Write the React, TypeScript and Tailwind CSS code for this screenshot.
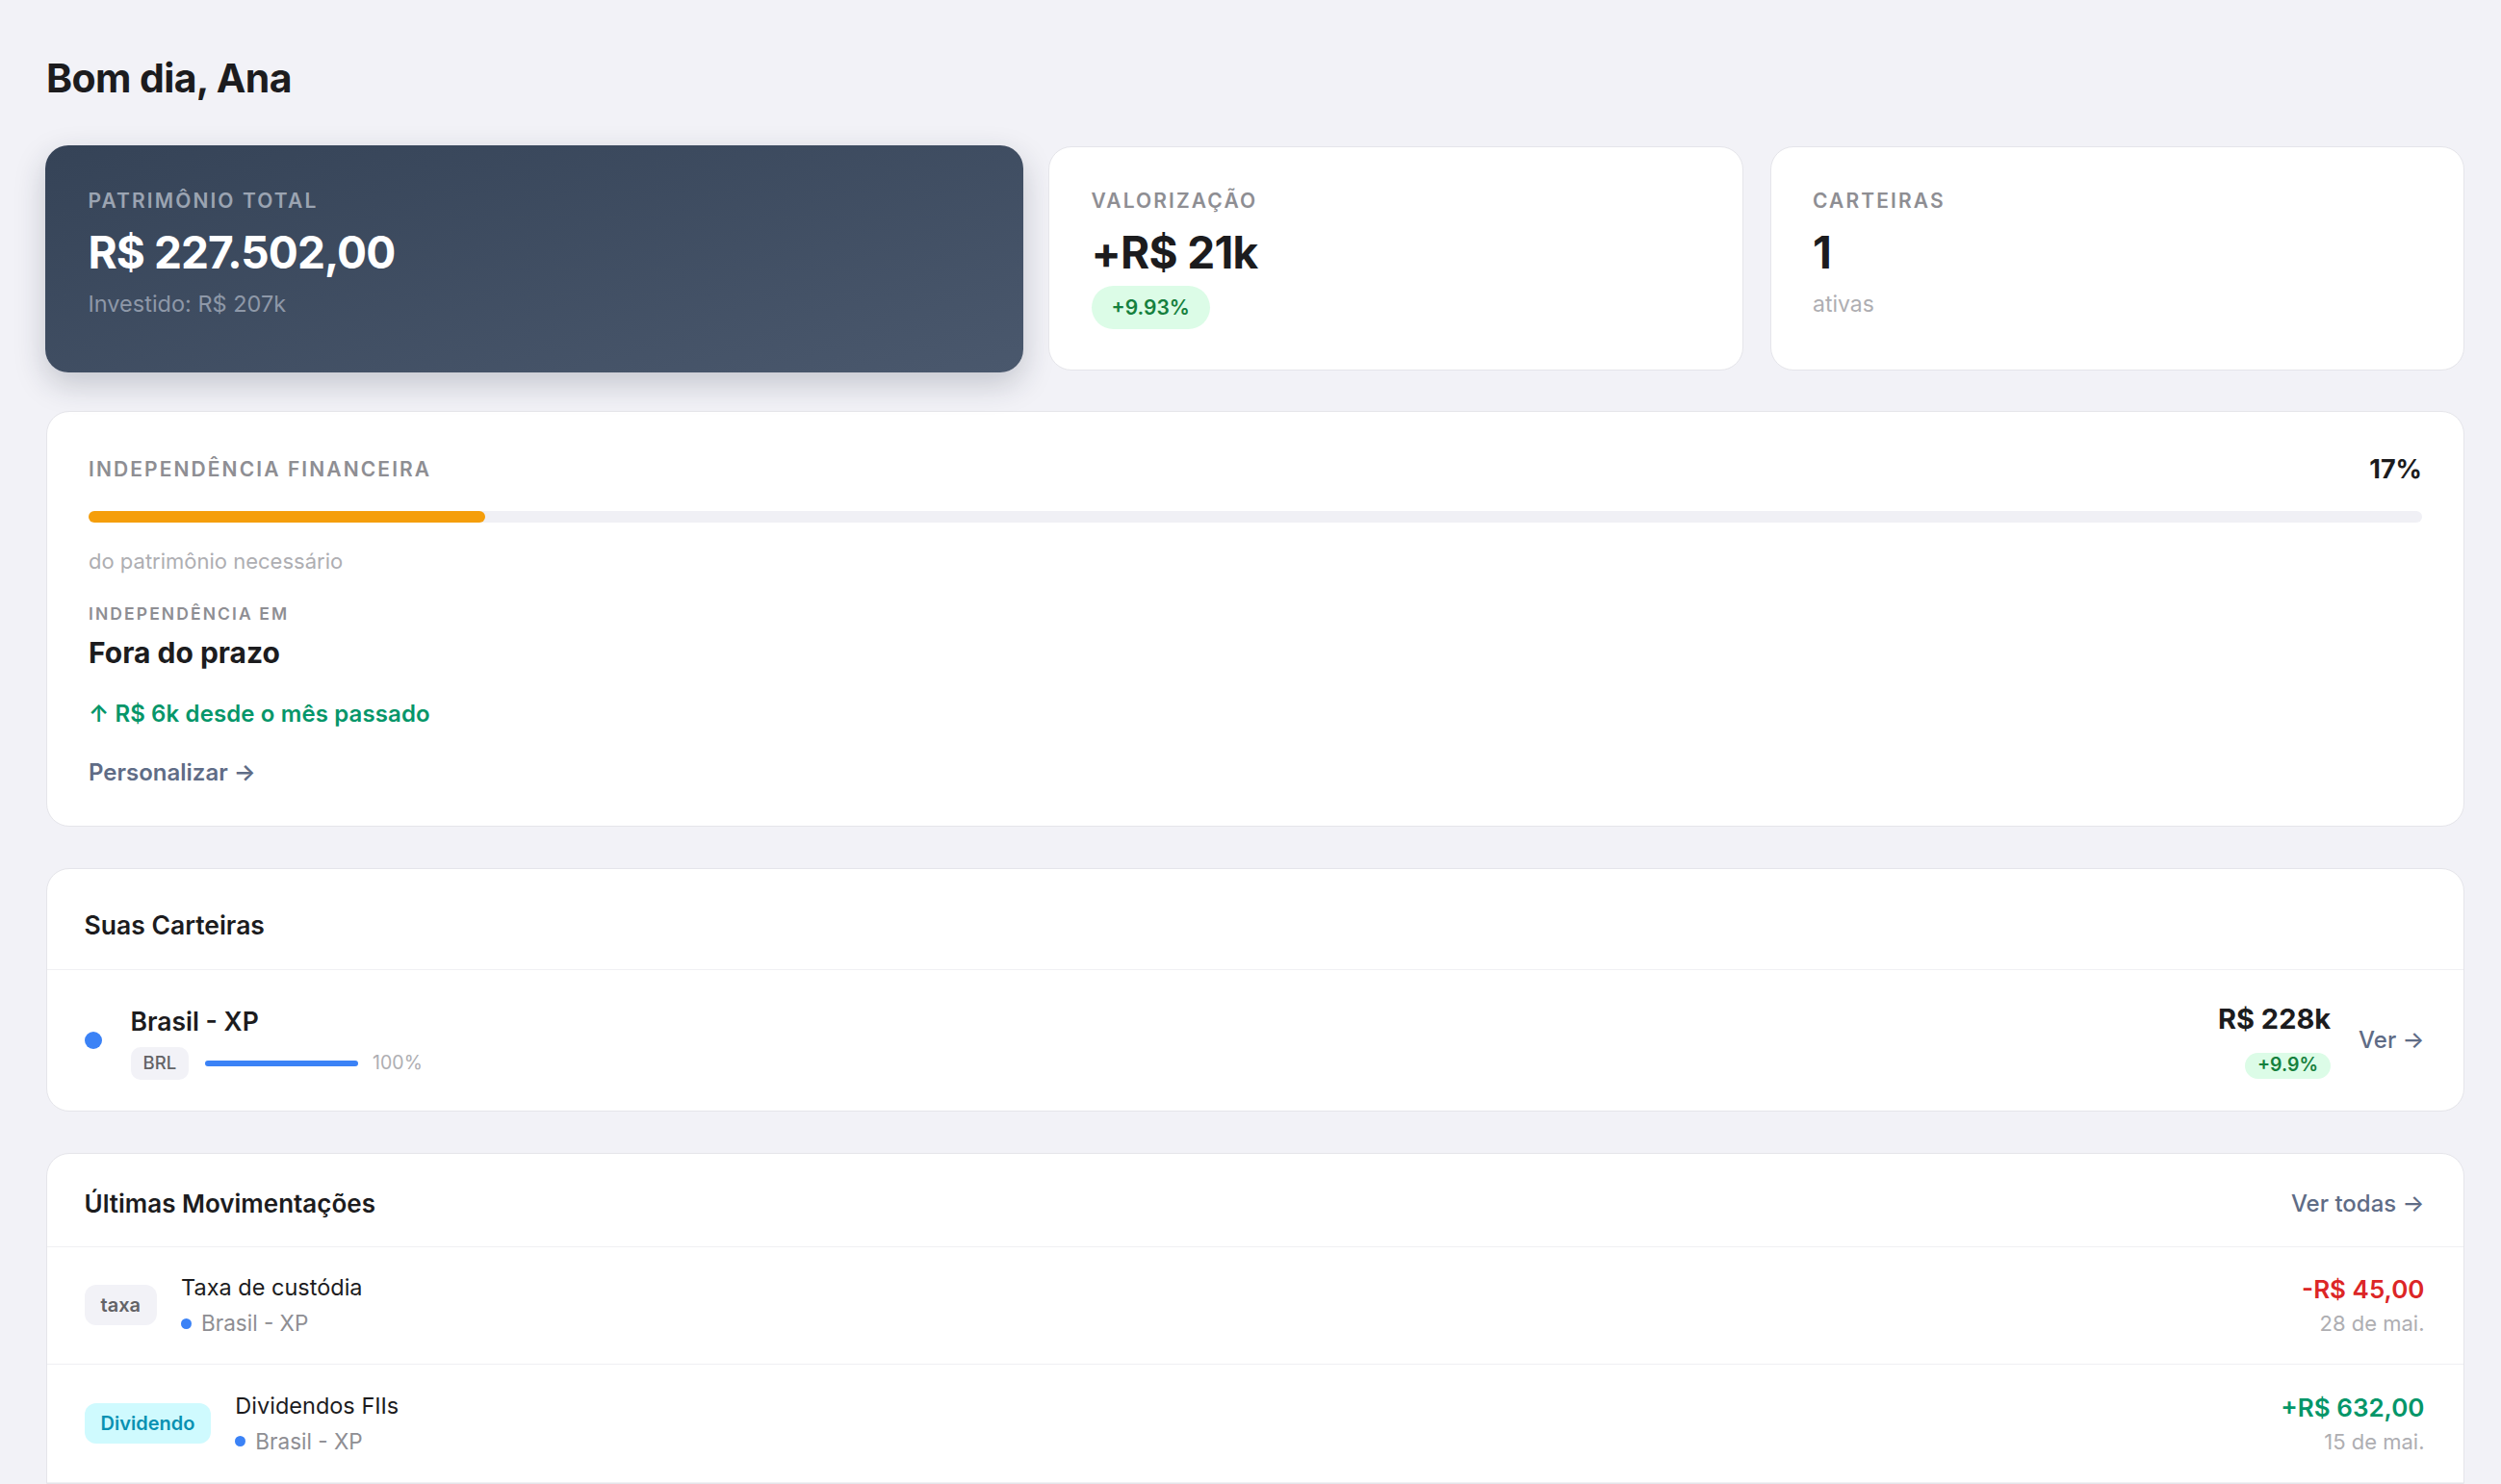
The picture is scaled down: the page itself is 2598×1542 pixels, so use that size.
import React from "react";

const label = "text-[21px] leading-[24px] font-semibold tracking-[0.1em] uppercase text-[#8e8e93]";

function MoveRow({
  badge,
  badgeCls,
  title,
  amount,
  amountCls,
  date,
}: {
  badge: string;
  badgeCls: string;
  title: string;
  amount: string;
  amountCls: string;
  date: string;
}) {
  return (
    <div className="flex items-center justify-between pl-[38.5px] pr-[40.5px] pt-[27.5px] pb-[28px] border-b-[1.5px] border-[#f0f0f3]">
      <div className="flex items-center gap-[25px]">
        <div className={`h-[42px] px-[17px] rounded-[12px] flex items-center text-[20px] font-semibold ${badgeCls}`}>{badge}</div>
        <div className="flex flex-col">
          <div className="text-[23.5px] leading-[30px] text-[#1c1c1e]">{title}</div>
          <div className="mt-[8px] flex items-center gap-[10px] text-[22.5px] leading-[28px] text-[#8e8e93]">
            <span className="w-[11px] h-[11px] rounded-full bg-[#3b82f6]" />
            <span>Brasil - XP</span>
          </div>
        </div>
      </div>
      <div className="flex flex-col items-end">
        <div className={`text-[26px] leading-[34px] font-semibold ${amountCls}`}>{amount}</div>
        <div className="mt-[4px] text-[22px] leading-[28px] text-[#aeaeb2]">{date}</div>
      </div>
    </div>
  );
}

export default function App() {
  return (
    <div className="h-[1542px] overflow-hidden bg-[#f2f2f7] font-['Inter',sans-serif] pl-[48px] pt-[58px]">
      <div className="w-[2512px]">
        <h1 className="text-[41px] leading-[46px] font-bold tracking-[-0.015em] text-[#1c1c1e]">Bom dia, Ana</h1>

        <div className="mt-[48px] grid grid-cols-[1013px_1fr_1fr] gap-[28px]">
          <div className="-m-[1.5px] rounded-[24px] bg-linear-to-br from-[#354357] to-[#4a586d] px-[45px] pt-[46px] shadow-[0_12px_32px_rgba(30,41,59,0.22)]">
            <div className="text-[21px] leading-[24px] font-semibold tracking-[0.1em] uppercase text-[#9ba4b2]">Patrimônio Total</div>
            <div className="mt-[14px] text-[46px] leading-[54px] font-bold tracking-[-0.02em] text-white">R$ 227.502,00</div>
            <div className="mt-[12px] text-[23.5px] leading-[30px] text-[#8e98a8]">Investido: R$ 207k</div>
          </div>

          <div className="rounded-[24px] bg-white border-[1.5px] border-[#e5e5ea] px-[43.5px] pt-[44px] pb-[42px]">
            <div className={label}>Valorização</div>
            <div className="mt-[14px] text-[46px] leading-[54px] font-bold tracking-[-0.015em] text-[#1c1c1e]">+R$ 21k</div>
            <div className="mt-[8px] inline-flex h-[45px] items-center rounded-full bg-[#dcfce7] px-[21px] text-[21px] font-semibold text-[#15803d]">+9.93%</div>
          </div>

          <div className="rounded-[24px] bg-white border-[1.5px] border-[#e5e5ea] px-[43.5px] pt-[44px] pb-[42px]">
            <div className={label}>Carteiras</div>
            <div className="mt-[14px] text-[46px] leading-[54px] font-bold tracking-[-0.02em] text-[#1c1c1e]">1</div>
            <div className="mt-[12px] text-[23px] leading-[30px] text-[#aeaeb2]">ativas</div>
          </div>
        </div>

        <div className="mt-[42px] rounded-[24px] bg-white border-[1.5px] border-[#e5e5ea] px-[43px] pt-[43.5px] pb-[40.5px]">
          <div className="flex h-[32px] items-center justify-between">
            <div className={label}>Independência Financeira</div>
            <div className="text-[27px] leading-[32px] font-bold text-[#1c1c1e]">17%</div>
          </div>
          <div className="mt-[27px] h-[12px] rounded-full bg-[#f0f0f5]">
            <div className="h-full rounded-full bg-[#f59e0b]" style={{ width: "17%" }} />
          </div>
          <div className="mt-[25px] text-[22px] leading-[30px] text-[#aeaeb2]">do patrimônio necessário</div>
          <div className="mt-[29px] text-[17.5px] leading-[22px] font-semibold tracking-[0.12em] uppercase text-[#8e8e93]">Independência em</div>
          <div className="mt-[11px] text-[30px] leading-[36px] font-bold text-[#1c1c1e]">Fora do prazo</div>
          <div className="mt-[31px] text-[24px] leading-[30px] font-semibold tracking-[0.005em] text-[#059669]">↑ R$ 6k desde o mês passado</div>
          <div className="mt-[31px] text-[24px] leading-[30px] font-semibold text-[#5f6c86]">Personalizar →</div>
        </div>

        <div className="mt-[43px] rounded-[24px] bg-white border-[1.5px] border-[#e5e5ea] overflow-hidden">
          <div className="pl-[38.5px] pr-[40.5px] pt-[41.5px] pb-[30px] border-b-[1.5px] border-[#f0f0f3]">
            <div className="text-[26.5px] leading-[32px] font-semibold text-[#1c1c1e]">Suas Carteiras</div>
          </div>
          <div className="flex h-[146px] items-center justify-between pl-[38.5px] pr-[40.5px]">
            <div className="flex items-center gap-[30px]">
              <span className="w-[18px] h-[18px] rounded-full bg-[#3b82f6]" />
              <div className="mt-[6px] flex flex-col">
                <div className="text-[26.5px] leading-[32px] font-semibold text-[#1c1c1e]">Brasil - XP</div>
                <div className="mt-[11px] flex items-center">
                  <span className="h-[34px] px-[13px] rounded-[10px] bg-[#f2f2f7] flex items-center text-[18.5px] font-medium text-[#636366]">BRL</span>
                  <span className="ml-[17px] w-[159px] h-[6px] rounded-full bg-[#3b82f6]" />
                  <span className="ml-[15px] text-[19.5px] text-[#aeaeb2]">100%</span>
                </div>
              </div>
            </div>
            <div className="flex items-center">
              <div className="flex flex-col items-end">
                <div className="text-[29px] leading-[36px] font-bold text-[#1c1c1e]">R$ 228k</div>
                <div className="mt-[17px] h-[27px] px-[13px] rounded-full bg-[#dcfce7] flex items-center text-[19.5px] font-semibold text-[#15803d]">+9.9%</div>
              </div>
              <div className="ml-[29px] text-[24px] font-medium text-[#5f6c86]">Ver →</div>
            </div>
          </div>
        </div>

        <div className="mt-[43px] rounded-t-[24px] bg-white border-[1.5px] border-[#e5e5ea] overflow-hidden">
          <div className="flex items-center justify-between pl-[38.5px] pr-[40.5px] pt-[36px] pb-[28px] border-b-[1.5px] border-[#f0f0f3]">
            <div className="text-[26px] leading-[32px] font-semibold text-[#1c1c1e]">Últimas Movimentações</div>
            <div className="text-[24px] leading-[32px] font-medium text-[#5f6c86]">Ver todas →</div>
          </div>
          <MoveRow
            badge="taxa"
            badgeCls="bg-[#f2f2f7] text-[#636366]"
            title="Taxa de custódia"
            amount="-R$ 45,00"
            amountCls="text-[#dc2626]"
            date="28 de mai."
          />
          <MoveRow
            badge="Dividendo"
            badgeCls="bg-[#cffafe] text-[#0891b2]"
            title="Dividendos FIIs"
            amount="+R$ 632,00"
            amountCls="text-[#059669]"
            date="15 de mai."
          />
        </div>
      </div>
    </div>
  );
}
